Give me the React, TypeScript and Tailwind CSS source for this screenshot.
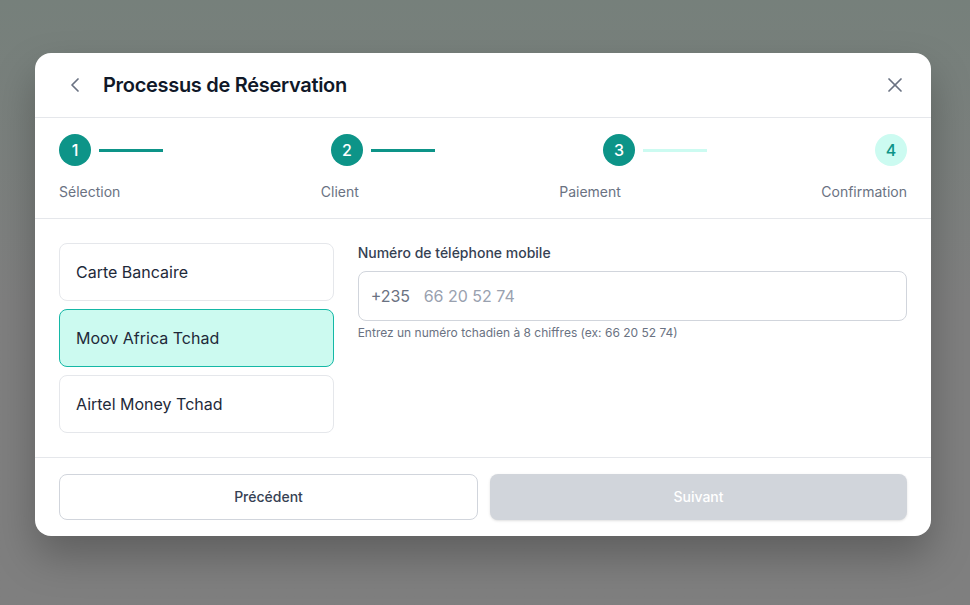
import React from 'react';
import { ChevronLeft, X } from 'lucide-react';

const steps = [
  { n: 1, label: 'Sélection', state: 'done' },
  { n: 2, label: 'Client', state: 'done' },
  { n: 3, label: 'Paiement', state: 'active' },
  { n: 4, label: 'Confirmation', state: 'todo' },
];

const methods = ['Carte Bancaire', 'Moov Africa Tchad', 'Airtel Money Tchad'];

export default function App() {
  const selected = 'Moov Africa Tchad';

  return (
    <div
      className="w-[970px] h-[605px] bg-[#7f7f7f] bg-gradient-to-b from-[#76807b] via-[#7f7f7f] to-[#7f7f7f] flex items-start pl-[35px] pt-[53px]"
      style={{ fontFamily: 'Inter, "Noto Sans", sans-serif' }}
    >
      <div className="w-[896px] bg-white rounded-2xl shadow-[0_20px_40px_rgba(0,0,0,0.25)] flex flex-col">
        {/* header */}
        <div className="h-[65px] flex items-center justify-between px-6 border-b border-gray-200">
          <div className="flex items-center gap-3">
            <button className="p-1 text-gray-500">
              <ChevronLeft className="w-6 h-6" strokeWidth={1.75} />
            </button>
            <h2 className="text-[20px] font-semibold text-gray-900 tracking-[-0.3px]">Processus de Réservation</h2>
          </div>
          <button className="text-gray-500">
            <X className="w-6 h-6" strokeWidth={1.75} />
          </button>
        </div>

        {/* stepper */}
        <div className="px-6 py-4 border-b border-gray-200">
          <div className="flex items-center justify-between">
            {steps.map((s, i) => (
              <div key={s.n} className="flex items-center gap-2">
                <div
                  className={
                    s.state === 'todo'
                      ? 'w-8 h-8 rounded-full bg-[#ccfbf1] text-[#0d9488] flex items-center justify-center text-base font-medium'
                      : 'w-8 h-8 rounded-full bg-[#0d9488] text-white flex items-center justify-center text-base font-medium'
                  }
                >
                  {s.n}
                </div>
                {i < steps.length - 1 && (
                  <div className={s.state === 'done' ? 'w-16 h-[3px] bg-[#0d9488]' : 'w-16 h-[3px] bg-[#ccfbf1]'} />
                )}
              </div>
            ))}
          </div>
          <div className="flex justify-between mt-4 text-sm text-gray-500">
            {steps.map((s) => (
              <span key={s.n}>{s.label}</span>
            ))}
          </div>
        </div>

        {/* body */}
        <div className="p-6 grid grid-cols-[1fr_2fr] gap-6 border-b border-gray-200">
          <div className="flex flex-col gap-2">
            {methods.map((m) =>
              m === selected ? (
                <button key={m} className="h-[58px] px-4 text-left rounded-lg border border-[#14b8a6] bg-[#ccfaf0] text-base text-gray-800">
                  {m}
                </button>
              ) : (
                <button key={m} className="h-[58px] px-4 text-left rounded-lg border border-gray-200 bg-white text-base text-gray-800">
                  {m}
                </button>
              )
            )}
          </div>
          <div>
            <label className="block text-sm font-medium text-gray-700 mb-2">Numéro de téléphone mobile</label>
            <div className="h-[50px] flex items-center rounded-lg border border-gray-300 px-3">
              <span className="text-base text-gray-500 w-[53px]">+235</span>
              <span className="text-base text-gray-400">66 20 52 74</span>
            </div>
            <p className="mt-1 text-xs text-gray-500">Entrez un numéro tchadien à 8 chiffres (ex: 66 20 52 74)</p>
          </div>
        </div>

        {/* footer */}
        <div className="px-6 pt-4 pb-4 flex gap-3">
          <button className="flex-1 h-[46px] rounded-lg border border-gray-300 text-sm font-medium text-gray-700">
            Précédent
          </button>
          <button className="flex-1 h-[46px] rounded-lg bg-[#d1d5db] text-sm font-medium text-white shadow-sm">
            Suivant
          </button>
        </div>
      </div>
    </div>
  );
}
